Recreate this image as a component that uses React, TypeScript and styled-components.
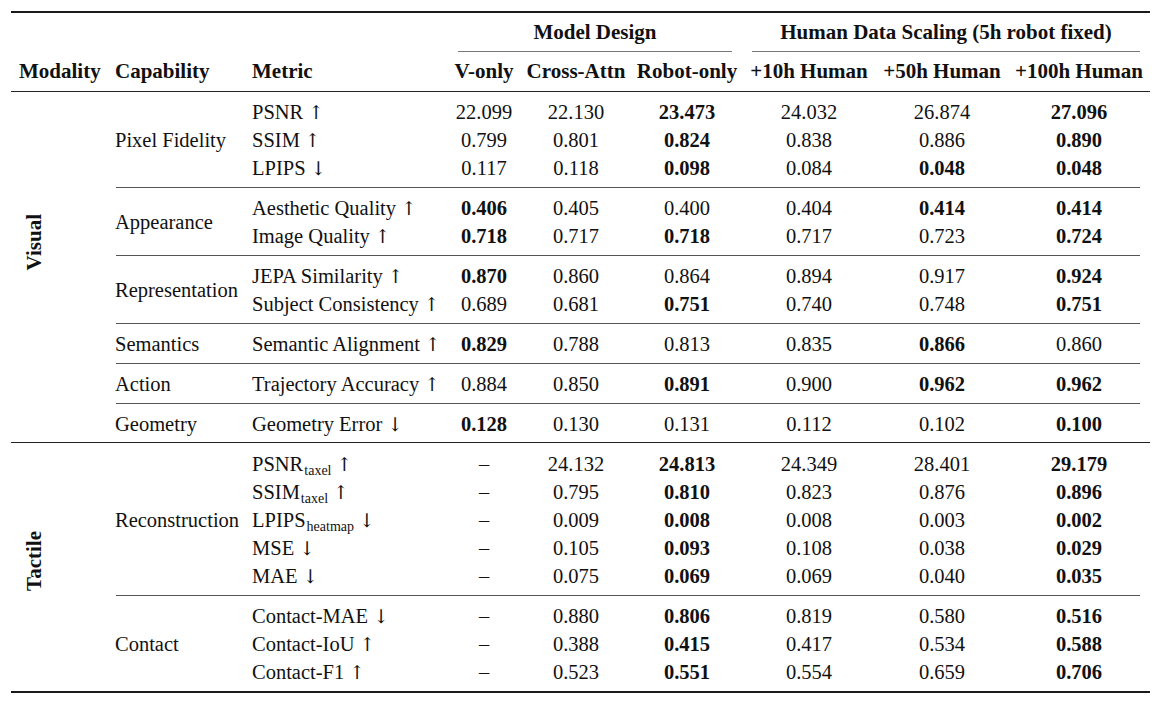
import React from "react";
import styled, { createGlobalStyle } from "styled-components";

const Global = createGlobalStyle`
  html, body { margin: 0; padding: 0; background: #ffffff; }
  body { font-family: "Liberation Serif", "Times New Roman", serif; color: #111; }
`;

const Page = styled.div`
  padding: 11px 8px 0 11px;
`;

const Table = styled.table`
  border-collapse: collapse;
  table-layout: fixed;
  width: 1139px;
  font-size: 20.5px;
`;

const Col = styled.col<{ $w: number }>`
  width: ${(p) => p.$w}px;
`;

const HeadCell = styled.th<{ $left?: boolean; $pad?: number }>`
  height: 28px;
  padding: 0 0 0 ${(p) => (p.$left ? p.$pad ?? 8 : 0)}px;
  line-height: 28px;
  font-size: 21px;
  font-weight: bold;
  white-space: nowrap;
  text-align: ${(p) => (p.$left ? "left" : "center")};
  vertical-align: middle;
`;

const Cell = styled.td<{ $left?: boolean; $pad?: number; $bold?: boolean }>`
  height: 28px;
  padding: 0 0 0 ${(p) => (p.$left ? p.$pad ?? 8 : 0)}px;
  line-height: 28px;
  white-space: nowrap;
  font-weight: ${(p) => (p.$bold ? "bold" : "normal")};
  text-align: ${(p) => (p.$left ? "left" : "center")};
  vertical-align: middle;
`;

const CapCell = styled.td`
  padding: 0 0 0 9px;
  white-space: nowrap;
  text-align: left;
  vertical-align: middle;
`;

const ModCell = styled.td<{ $lift: number }>`
  padding: 0 0 ${(p) => p.$lift}px 0;
  text-align: left;
  vertical-align: middle;
`;

const Rotated = styled.div`
  width: 34px;
  margin-left: 6px;
  font-size: 21px;
  font-weight: bold;
  writing-mode: vertical-rl;
  transform: rotate(180deg);
  white-space: nowrap;
  display: flex;
  align-items: center;
  justify-content: center;
`;

const RuleCell = styled.td`
  padding: 0;
  line-height: 0;
  font-size: 0;
  height: auto;
`;

const Rule = styled.div<{ $above: number; $below: number; $trim: number; $w: number; $c: string }>`
  height: ${(p) => p.$w}px;
  background: ${(p) => p.$c};
  margin: ${(p) => p.$above}px ${(p) => p.$trim}px ${(p) => p.$below}px;
`;

const Sub = styled.sub`
  font-size: 14px;
  line-height: 0;
  vertical-align: -4px;
  margin-left: 1px;
`;

const Arrow = styled.span`
  font-family: "DejaVu Serif", serif;
  font-size: 19px;
  color: #111;
  margin-left: 5px;
`;

type Metric = { name: string; sub?: string; dir: "up" | "down"; vals: string[] };
type Group = { cap: string; rows: Metric[] };
type Section = { modality: string; lift: number; groups: Group[] };

const sections: Section[] = [
  {
    modality: "Visual",
    lift: 52,
    groups: [
      {
        cap: "Pixel Fidelity",
        rows: [
          { name: "PSNR", dir: "up", vals: ["22.099", "22.130", "!23.473", "24.032", "26.874", "!27.096"] },
          { name: "SSIM", dir: "up", vals: ["0.799", "0.801", "!0.824", "0.838", "0.886", "!0.890"] },
          { name: "LPIPS", dir: "down", vals: ["0.117", "0.118", "!0.098", "0.084", "!0.048", "!0.048"] },
        ],
      },
      {
        cap: "Appearance",
        rows: [
          { name: "Aesthetic Quality", dir: "up", vals: ["!0.406", "0.405", "0.400", "0.404", "!0.414", "!0.414"] },
          { name: "Image Quality", dir: "up", vals: ["!0.718", "0.717", "!0.718", "0.717", "0.723", "!0.724"] },
        ],
      },
      {
        cap: "Representation",
        rows: [
          { name: "JEPA Similarity", dir: "up", vals: ["!0.870", "0.860", "0.864", "0.894", "0.917", "!0.924"] },
          { name: "Subject Consistency", dir: "up", vals: ["0.689", "0.681", "!0.751", "0.740", "0.748", "!0.751"] },
        ],
      },
      {
        cap: "Semantics",
        rows: [
          { name: "Semantic Alignment", dir: "up", vals: ["!0.829", "0.788", "0.813", "0.835", "!0.866", "0.860"] },
        ],
      },
      {
        cap: "Action",
        rows: [
          { name: "Trajectory Accuracy", dir: "up", vals: ["0.884", "0.850", "!0.891", "0.900", "!0.962", "!0.962"] },
        ],
      },
      {
        cap: "Geometry",
        rows: [
          { name: "Geometry Error", dir: "down", vals: ["!0.128", "0.130", "0.131", "0.112", "0.102", "!0.100"] },
        ],
      },
    ],
  },
  {
    modality: "Tactile",
    lift: 15,
    groups: [
      {
        cap: "Reconstruction",
        rows: [
          { name: "PSNR", sub: "taxel", dir: "up", vals: ["–", "24.132", "!24.813", "24.349", "28.401", "!29.179"] },
          { name: "SSIM", sub: "taxel", dir: "up", vals: ["–", "0.795", "!0.810", "0.823", "0.876", "!0.896"] },
          { name: "LPIPS", sub: "heatmap", dir: "down", vals: ["–", "0.009", "!0.008", "0.008", "0.003", "!0.002"] },
          { name: "MSE", dir: "down", vals: ["–", "0.105", "!0.093", "0.108", "0.038", "!0.029"] },
          { name: "MAE", dir: "down", vals: ["–", "0.075", "!0.069", "0.069", "0.040", "!0.035"] },
        ],
      },
      {
        cap: "Contact",
        rows: [
          { name: "Contact-MAE", dir: "down", vals: ["–", "0.880", "!0.806", "0.819", "0.580", "!0.516"] },
          { name: "Contact-IoU", dir: "up", vals: ["–", "0.388", "!0.415", "0.417", "0.534", "!0.588"] },
          { name: "Contact-F1", dir: "up", vals: ["–", "0.523", "!0.551", "0.554", "0.659", "!0.706"] },
        ],
      },
    ],
  },
];

const widths = [95, 138, 204, 72, 112, 110, 134, 132, 142];

function MetricLabel({ m }: { m: Metric }) {
  return (
    <>
      {m.name}
      {m.sub && <Sub>{m.sub}</Sub>}
      <Arrow>{m.dir === "up" ? "↑" : "↓"}</Arrow>
    </>
  );
}

function renderSection(s: Section) {
  const dataRows = s.groups.reduce((n, g) => n + g.rows.length, 0);
  const span = dataRows + s.groups.length - 1;
  const out: React.ReactNode[] = [];
  s.groups.forEach((g, gi) => {
    if (gi > 0) {
      out.push(
        <tr key={`${s.modality}-sep-${gi}`}>
          <RuleCell colSpan={8}>
            <Rule $above={5} $below={6} $trim={10} $w={1} $c="#555" />
          </RuleCell>
        </tr>
      );
    }
    g.rows.forEach((m, ri) => {
      out.push(
        <tr key={`${s.modality}-${gi}-${ri}`}>
          {gi === 0 && ri === 0 && (
            <ModCell rowSpan={span} $lift={s.lift}>
              <Rotated>{s.modality}</Rotated>
            </ModCell>
          )}
          {ri === 0 && <CapCell rowSpan={g.rows.length}>{g.cap}</CapCell>}
          <Cell $left $pad={8}>
            <MetricLabel m={m} />
          </Cell>
          {m.vals.map((v, vi) => (
            <Cell key={vi} $bold={v.startsWith("!")}>
              {v.replace("!", "")}
            </Cell>
          ))}
        </tr>
      );
    });
  });
  return out;
}

export default function App() {
  return (
    <>
      <Global />
      <Page>
        <Table>
          <colgroup>
            {widths.map((w, i) => (
              <Col key={i} $w={w} />
            ))}
          </colgroup>
          <thead>
            <tr>
              <RuleCell colSpan={9}>
                <Rule $above={0} $below={5} $trim={0} $w={2} $c="#1a1a1a" />
              </RuleCell>
            </tr>
            <tr>
              <HeadCell colSpan={3} />
              <HeadCell colSpan={3}>Model Design</HeadCell>
              <HeadCell colSpan={3}>Human Data Scaling (5h robot fixed)</HeadCell>
            </tr>
            <tr>
              <RuleCell colSpan={3} />
              <RuleCell colSpan={3}>
                <Rule $above={5} $below={5} $trim={10} $w={1} $c="#777" />
              </RuleCell>
              <RuleCell colSpan={3}>
                <Rule $above={5} $below={5} $trim={10} $w={1} $c="#777" />
              </RuleCell>
            </tr>
            <tr>
              <HeadCell $left $pad={8}>Modality</HeadCell>
              <HeadCell $left $pad={9}>Capability</HeadCell>
              <HeadCell $left $pad={8}>Metric</HeadCell>
              <HeadCell>V-only</HeadCell>
              <HeadCell>Cross-Attn</HeadCell>
              <HeadCell>Robot-only</HeadCell>
              <HeadCell>+10h Human</HeadCell>
              <HeadCell>+50h Human</HeadCell>
              <HeadCell>+100h Human</HeadCell>
            </tr>
            <tr>
              <RuleCell colSpan={9}>
                <Rule $above={6} $below={6} $trim={0} $w={1} $c="#222" />
              </RuleCell>
            </tr>
          </thead>
          <tbody>
            {renderSection(sections[0])}
            <tr>
              <RuleCell colSpan={9}>
                <Rule $above={4} $below={7} $trim={0} $w={1} $c="#222" />
              </RuleCell>
            </tr>
            {renderSection(sections[1])}
            <tr>
              <RuleCell colSpan={9}>
                <Rule $above={5} $below={0} $trim={0} $w={2} $c="#1a1a1a" />
              </RuleCell>
            </tr>
          </tbody>
        </Table>
      </Page>
    </>
  );
}
